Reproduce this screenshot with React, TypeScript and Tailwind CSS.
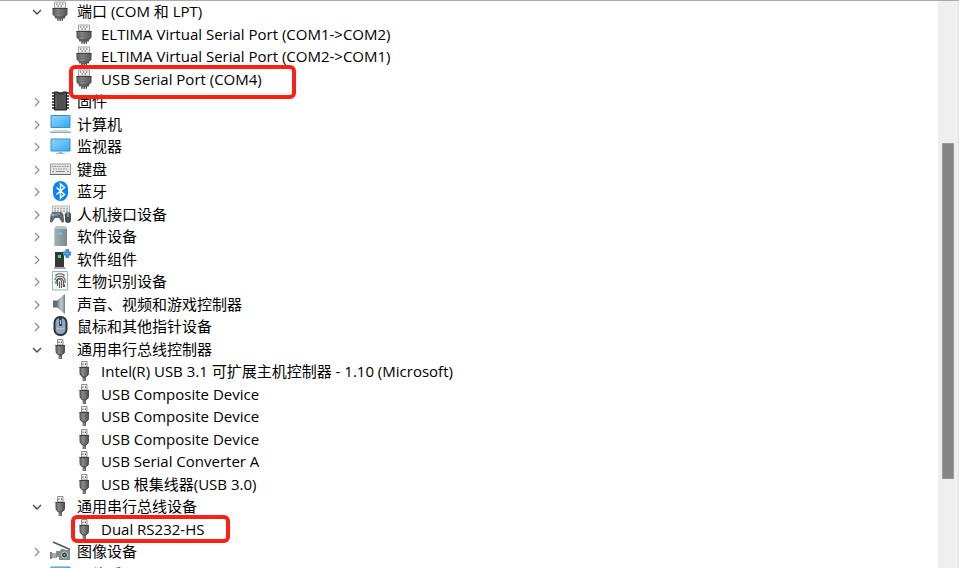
import React from "react";

type IconName =
  | "port" | "chip" | "computer" | "monitor" | "keyboard" | "bluetooth" | "hid"
  | "device" | "component" | "finger" | "speaker" | "mouse" | "usb" | "camera" | "network";

interface Item {
  label: string;
  icon: IconName;
  child?: boolean;
  open?: boolean;
}

const items: Item[] = [
  { label: "端口 (COM 和 LPT)", icon: "port", open: true },
  { label: "ELTIMA Virtual Serial Port (COM1->COM2)", icon: "port", child: true },
  { label: "ELTIMA Virtual Serial Port (COM2->COM1)", icon: "port", child: true },
  { label: "USB Serial Port (COM4)", icon: "port", child: true },
  { label: "固件", icon: "chip" },
  { label: "计算机", icon: "computer" },
  { label: "监视器", icon: "monitor" },
  { label: "键盘", icon: "keyboard" },
  { label: "蓝牙", icon: "bluetooth" },
  { label: "人机接口设备", icon: "hid" },
  { label: "软件设备", icon: "device" },
  { label: "软件组件", icon: "component" },
  { label: "生物识别设备", icon: "finger" },
  { label: "声音、视频和游戏控制器", icon: "speaker" },
  { label: "鼠标和其他指针设备", icon: "mouse" },
  { label: "通用串行总线控制器", icon: "usb", open: true },
  { label: "Intel(R) USB 3.1 可扩展主机控制器 - 1.10 (Microsoft)", icon: "usb", child: true },
  { label: "USB Composite Device", icon: "usb", child: true },
  { label: "USB Composite Device", icon: "usb", child: true },
  { label: "USB Composite Device", icon: "usb", child: true },
  { label: "USB Serial Converter A", icon: "usb", child: true },
  { label: "USB 根集线器(USB 3.0)", icon: "usb", child: true },
  { label: "通用串行总线设备", icon: "usb", open: true },
  { label: "Dual RS232-HS", icon: "usb", child: true },
  { label: "图像设备", icon: "camera" },
  { label: "网络适配器", icon: "network" },
];

function Gradients() {
  return (
    <svg className="absolute size-0" aria-hidden="true">
      <defs>
        <linearGradient id="plug" x1="0" y1="0" x2="1" y2="0">
          <stop offset="0" stopColor="#505050" />
          <stop offset=".35" stopColor="#8a8a8a" />
          <stop offset="1" stopColor="#4a4a4a" />
        </linearGradient>
        <linearGradient id="screen" x1="0" y1="0" x2="1" y2="1">
          <stop offset="0" stopColor="#8fd6ff" />
          <stop offset=".5" stopColor="#62c0fb" />
          <stop offset="1" stopColor="#35a5ef" />
        </linearGradient>
        <linearGradient id="metal" x1="0" y1="0" x2="1" y2="0">
          <stop offset="0" stopColor="#a7b0b6" />
          <stop offset="1" stopColor="#7d888f" />
        </linearGradient>
        <linearGradient id="cone" x1="0" y1="0" x2="1" y2="0">
          <stop offset="0" stopColor="#6f7a82" />
          <stop offset=".6" stopColor="#c3cacf" />
          <stop offset="1" stopColor="#8c979e" />
        </linearGradient>
      </defs>
    </svg>
  );
}

function Glyph({ name }: { name: IconName }) {
  switch (name) {
    case "port":
      return (
        <>
          <path d="M4.500 1h11v6h-11z" fill="#f4f4f4" stroke="#a0a0a0" />
          <path d="M6 3h1.500M9 3h1.500M12 3h1.500M7.500 5H9M10.500 5H12" stroke="#8a8a8a" strokeWidth="1.500" />
          <path d="M2.500 7h15v6.500L15 16v1.500h-2V20H7v-2.500H5V16l-2.500-2.500z" fill="url(#plug)" />
          <path d="M2.500 7.500h15" stroke="#3f3f3f" />
          <path d="M4 10h12M4 12.500h12" stroke="#6c6c6c" />
          <path d="M5 16h10M7 18h6" stroke="#444" />
          <path d="M9 18v2M11.500 18v2" stroke="#ddd" strokeWidth=".8" />
        </>
      );
    case "chip":
      return (
        <>
          <path d="M2 2h17M2 5h17M2 8h17M2 11h17M2 14h17M2 17h17" stroke="#1d1d1d" strokeWidth="1.600" />
          <path d="M4.500 1H8c0 3 5 3 5 0h3.500v18h-12z" fill="#505050" stroke="#1c1c1c" />
          <path d="M6 6v11" stroke="#6f6f6f" />
        </>
      );
    case "computer":
      return (
        <>
          <path d="M1 1.500h19v12H1z" fill="url(#screen)" stroke="#3a8fc4" />
          <path d="M3 16h15l3 2H0z" fill="#c3d8e2" />
          <path d="M0 18h21v1H0z" fill="#8aa9b9" />
        </>
      );
    case "monitor":
    case "network":
      return (
        <>
          <path d="M1 3h19v12H1z" fill="url(#screen)" stroke="#3a8fc4" />
          <path d="M8.500 15.500h4v1.500H15v1H6v-1h2.500z" fill="#9fbccb" />
        </>
      );
    case "keyboard":
      return (
        <>
          <path d="M.5 5h20v10.500H.5z" fill="#e6e6e6" stroke="#9b9b9b" />
          <path d="M2 7.500h17M3 10h15" stroke="#888" strokeWidth="1.200" strokeDasharray="1.500 1" />
          <path d="M2 12.500h2m2 0h9m2 0h2" stroke="#888" strokeWidth="1.200" />
          <path d="M0 15.500h21" stroke="#666" />
        </>
      );
    case "bluetooth":
      return (
        <>
          <rect x="3" y="0" width="15" height="20" rx="7.500" fill="#0783f7" />
          <path d="m6.500 6.500 8 7-4 3.500V3l4 3.500-8 7" fill="none" stroke="#fff" strokeWidth="1.500" />
        </>
      );
    case "hid":
      return (
        <>
          <path d="M2.500 2h17v9h-17z" fill="#ececec" stroke="#b5b5b5" />
          <path d="M4 4.500h14M4 7h14" stroke="#aaa" strokeDasharray="2 1" strokeWidth="1.300" />
          <path d="M3 8h8c2 0 3 5 3 9 0 2-2 2-3 0l-2-3H5l-2 3c-1 2-3 2-3 0 0-4 1-9 3-9z" fill="#5d666e" />
          <path d="M1.500 11h3M3 9.500v3" stroke="#ccc" />
          <path d="M5 9h2.500v3H5z" fill="#3d9eea" />
          <path d="M8 8.500h2V11H8z" fill="#e86c44" />
          <rect x="15" y="8" width="6" height="11" rx="3" fill="#47515b" />
          <path d="M18 8v5" stroke="#bac5cc" />
        </>
      );
    case "device":
      return (
        <>
          <path d="m4 3 2-3h9l2 3v17H4z" fill="url(#metal)" />
          <path d="m4 3 2-3h9l2 3z" fill="#b9c2c5" />
          <path d="M4.500 3v17" stroke="#bec7c9" />
          <path d="m10.500 5.500 2 2-2 2-2-2z" fill="#43d9ef" />
        </>
      );
    case "component":
      return (
        <>
          <path d="M5 3h9v15H5z" fill="#343638" />
          <path d="M4 18h11l1 2H4z" fill="#aaa" />
          <path d="M8 6h3v3H8z" fill="#4de653" />
          <path d="M13 2.500h2.500V0H19v2.500h2v4h-2V9h-3.500V6.500H13z" fill="#2f86c8" />
          <path d="M13 4.500h8M17.200 0v9" stroke="#63b1e5" strokeWidth=".8" />
        </>
      );
    case "finger":
      return (
        <>
          <path d="M2.500.5h15v18.500h-15z" fill="#f4f8f6" stroke="#93b8af" />
          <path d="M5.500 5c1-3 8-3 9 0M5 9c0-5 10-5 10 0v3M6 13c-1-7 8-8 7.500-1v4M7.500 15V9.500c0-2 4-2 4 1V17M9.500 17v-6.500M14.500 13.500V16" fill="none" stroke="#555" strokeWidth="1.100" />
        </>
      );
    case "speaker":
      return (
        <>
          <path d="M3 6.500h4v7H3z" fill="#606b72" />
          <path d="m7 6.500 7-6v19l-7-6z" fill="url(#cone)" />
          <path d="M14.500.5v19" stroke="#7c878e" />
        </>
      );
    case "mouse":
      return (
        <>
          <rect x="4.500" y="1" width="12" height="18" rx="5.500" fill="#8ea7bd" stroke="#2a343d" strokeWidth="2" />
          <path d="M10.500 2v8" stroke="#25313b" strokeWidth="2.500" />
          <path d="M10.500 4v4" stroke="#b8d2e6" />
          <path d="M6 12c3 1 6 1 9 0" stroke="#b4c8d8" fill="none" />
        </>
      );
    case "usb":
      return (
        <>
          <path d="M7.500.5h5.500V6H7.500z" fill="#eee" stroke="#8f8f8f" />
          <path d="M8.500 2.500h1v1.500h-1zm2.500 0h1v1.500h-1z" fill="#555" />
          <path d="M5.500 6h9.500v6c0 2-2 3-3 4v4H8.500v-4c-1-1-3-2-3-4z" fill="url(#plug)" />
          <path d="M5.500 6.500H15M6 13c1 2 2 2 3 3h2.500c1-1 2-1 3-3" stroke="#3d3d3d" fill="none" />
        </>
      );
    case "camera":
      return (
        <>
          <path d="m3 1 17 7.500" stroke="#555" strokeWidth="1.500" />
          <path d="M1 12h6v5H1z" fill="#a5a9aa" />
          <path d="M0 11h2v7H0z" fill="#7d8283" />
          <path d="M6 10h4l1-2h3l2 1h4v10H9v-3H6z" fill="#858c8e" />
          <circle cx="14.500" cy="14" r="3" fill="#263a42" stroke="#d0d6d8" />
          <circle cx="14.500" cy="14" r="1" fill="#63c3b1" />
        </>
      );
  }
}

function Chevron({ open }: { open?: boolean }) {
  return (
    <svg className="block size-3" viewBox="0 0 12 12" fill="none" aria-hidden="true">
      {open ? (
        <path d="m2 5 4 4 4-4" stroke="#444" strokeWidth="1.300" />
      ) : (
        <path d="m4 3 4 4-4 4" stroke="#8c8c8c" strokeWidth="1.200" />
      )}
    </svg>
  );
}

function Row({ item }: { item: Item }) {
  return (
    <li
      role="treeitem"
      aria-level={item.child ? 2 : 1}
      aria-expanded={item.child ? undefined : !!item.open}
      className={
        item.child
          ? "relative flex items-center pb-0.5 pl-[74px]"
          : "relative flex items-center pb-0.5 pl-[31px]"
      }
    >
      {!item.child && (
        <button type="button" aria-label={item.label} className="mr-[7px] shrink-0">
          <Chevron open={item.open} />
        </button>
      )}
      <svg className="mr-1.5 h-5 w-[21px] shrink-0" viewBox="0 0 21 20" aria-hidden="true">
        <Glyph name={item.icon} />
      </svg>
      <span>{item.label}</span>
      {item.label === "USB Serial Port (COM4)" && (
        <span className="pointer-events-none absolute -top-[3px] left-[69px] z-10 h-[34px] w-[227px] rounded-md border-4 border-[#fb2015]" />
      )}
      {item.label === "Dual RS232-HS" && (
        <span className="pointer-events-none absolute -top-[3px] left-[71px] z-10 h-[28px] w-[159px] rounded-md border-4 border-[#fb2015]" />
      )}
    </li>
  );
}

export default function App() {
  return (
    <main className="flex h-screen overflow-hidden border-t border-[#aaa] bg-white font-['Open_Sans','Noto_Sans_CJK_SC',sans-serif] text-[15px] leading-5 text-black">
      <Gradients />
      <ul role="tree" aria-label="设备管理器" className="grid min-w-0 flex-1 auto-rows-[22px_23px] content-start whitespace-nowrap">
        {items.map((item, i) => (
          <Row key={i} item={item} />
        ))}
      </ul>
      <div className="flex w-[21px] shrink-0 flex-col items-center border-r border-[#e2e2e2] bg-[#efefef]">
        <div className="grow-[142]" />
        <div className="w-3 grow-[336] border border-[#999] bg-[#858585]" />
        <div className="grow-[89]" />
      </div>
    </main>
  );
}
